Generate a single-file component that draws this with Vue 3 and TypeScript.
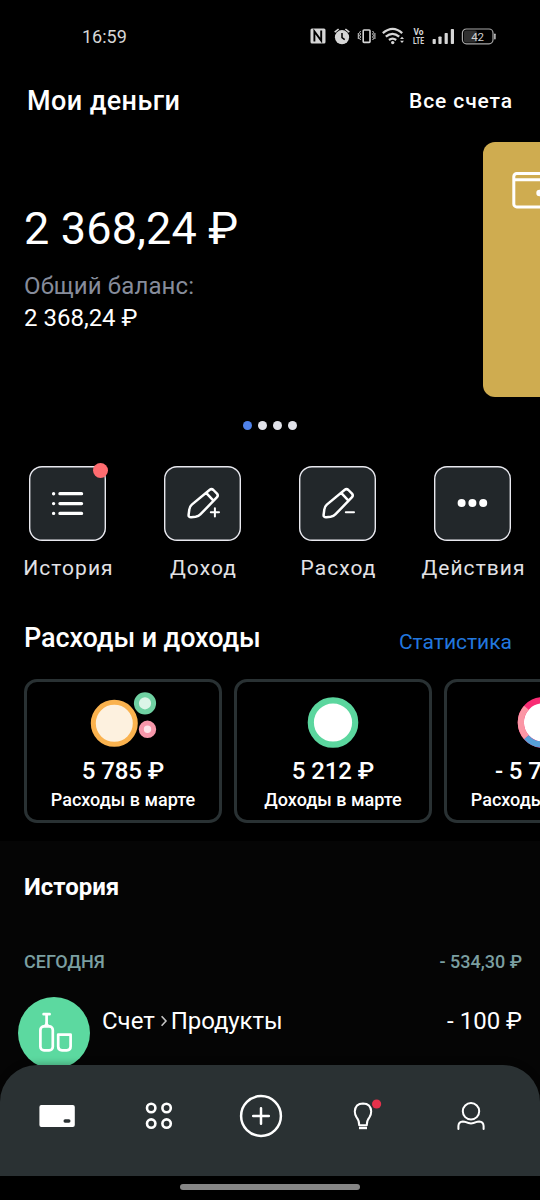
<script setup lang="ts">
type ActionIcon = 'list' | 'add' | 'minus' | 'more'

interface Action {
  label: string
  icon: ActionIcon
  badge?: boolean
}

interface Summary {
  amount: string
  caption: string
  chart: 'bubbles' | 'single' | 'parts'
}

const pages: boolean[] = [true, false, false, false]

const actions: Action[] = [
  { label: 'История', icon: 'list', badge: true },
  { label: 'Доход', icon: 'add' },
  { label: 'Расход', icon: 'minus' },
  { label: 'Действия', icon: 'more' },
]

const summaries: Summary[] = [
  { amount: '5 785 ₽', caption: 'Расходы в марте', chart: 'bubbles' },
  { amount: '5 212 ₽', caption: 'Доходы в марте', chart: 'single' },
  { amount: '- 5 785 ₽', caption: 'Расходы в марте', chart: 'parts' },
]
</script>

<template>
  <div class="screen">
    <header class="status">
      <span class="clock">16:59</span>
      <svg class="status-icons" width="190" height="20" viewBox="0 0 190 20">
        <g fill="none" stroke="#d6d6d6">
          <rect x="0.5" y="2.5" width="15" height="15" rx="1.5" fill="#d6d6d6" stroke="none" />
          <path d="M4.4 15.4V5.4l6.8 9.2V4.6" stroke="#000" stroke-width="1.9" />
          <circle cx="32" cy="11.2" r="7.1" fill="#d6d6d6" stroke="none" />
          <path d="M24.7 6.2l3.9-3.2M39.3 6.2l-3.9-3.2" stroke-width="1.6" />
          <path d="M32 7v4.6l2.7 2" stroke="#000" stroke-width="1.5" />
          <rect x="53.2" y="4" width="6.8" height="12.4" rx="0.8" stroke-width="1.6" />
          <path d="M50.6 5l-1 1.5 1 1.5-1 1.5 1 1.5-1 1.5 1 1.5M62.6 5l1 1.5-1 1.5 1 1.5-1 1.5 1 1.5-1 1.5M48.3 7v6M64.9 7v6" stroke-width="1" />
          <path d="M72.8 7.2q10-8.6 19.4 0M75.8 10.7q6.8-5.7 13.4 0M79 14q3.5-2.8 7.2 0" stroke-width="2.3" />
          <circle cx="82.7" cy="16.6" r="1.7" fill="#d6d6d6" stroke="none" />
          <path d="M90 13l2-2.3 2 2.3zM90 14.8l2 2.3 2-2.3z" fill="#d6d6d6" stroke="none" />
        </g>
        <text class="volte" x="103.4" y="8.8" textLength="10" lengthAdjust="spacingAndGlyphs">Vo</text>
        <text class="volte" x="103" y="17.8" textLength="11" lengthAdjust="spacingAndGlyphs">LTE</text>
        <g fill="#d6d6d6">
          <rect x="122.6" y="13" width="3.2" height="5" rx="0.8" />
          <rect x="128.4" y="10.4" width="3.2" height="7.6" rx="0.8" />
          <rect x="134.6" y="7" width="3.2" height="11" rx="0.8" />
          <rect x="140.8" y="3" width="3.2" height="15" rx="0.8" />
          <rect x="184.2" y="7.5" width="1.4" height="6" rx="0.7" />
        </g>
        <rect x="154" y="4.6" width="13" height="11.8" rx="2" fill="#303030" />
        <rect x="152.4" y="3" width="30.6" height="14.8" rx="4" fill="none" stroke="#a8a8a8" stroke-width="1.2" />
        <text class="battery" x="167.6" y="14.6" text-anchor="middle">42</text>
      </svg>
    </header>

    <div class="heading">
      <h1>Мои деньги</h1>
      <a class="all">Все счета</a>
    </div>

    <section class="carousel">
      <div class="balance">
        <div class="total">2 368,24 ₽</div>
        <div class="total-label">Общий баланс:</div>
        <div class="total-small">2 368,24 ₽</div>
      </div>
      <div class="account">
        <svg width="44" height="38" viewBox="0 0 44 38" fill="none" stroke="#fff" stroke-width="3">
          <rect x="1.8" y="1.5" width="40" height="33.4" rx="3" />
          <path d="M2 7.7h39" />
          <circle cx="27.5" cy="21" r="3.2" fill="#fff" stroke="none" />
        </svg>
      </div>
    </section>

    <div class="dots">
      <i v-for="(active, i) in pages" :key="i" :class="{ active }"></i>
    </div>

    <nav class="actions">
      <div v-for="a in actions" :key="a.label" class="action">
        <div class="tile">
          <svg width="77" height="75" viewBox="0 0 77 75" fill="none" stroke="#fff" stroke-linecap="round" stroke-linejoin="round">
            <template v-if="a.icon === 'list'">
              <path d="M30.9 27.7h21.7M30.9 37.6h21.7M30.9 47.4h21.7" stroke-width="3.2" />
              <path d="M24.6 27.7h.01M24.6 37.6h.01M24.6 47.4h.01" stroke-width="3.4" />
            </template>
            <g v-else-if="a.icon === 'more'" fill="#fff" stroke="none">
              <circle cx="27.6" cy="37" r="4" />
              <circle cx="38.4" cy="37" r="4" />
              <circle cx="49.2" cy="37" r="4" />
            </g>
            <template v-else>
              <path d="M27.8 38.6L45.8 23.8Q47.6 22.3 49.4 24L53 27.7Q54.6 29.5 52.8 31.4L36.6 48.2Q34.6 50.4 31.6 50.8L27.2 51.2Q24.4 51.3 24.6 48.8L25.3 43.6Q25.7 40.5 27.8 38.6ZM42.4 27.2L49.4 34.6" stroke-width="2.5" />
              <path v-if="a.icon === 'add'" d="M46.8 46.3h8.2M50.9 42.2v8.2" stroke-width="2" />
              <path v-else d="M46.8 46.3h8.2" stroke-width="2" />
            </template>
          </svg>
          <i v-if="a.badge" class="badge"></i>
        </div>
        <span>{{ a.label }}</span>
      </div>
    </nav>

    <div class="subheading">
      <h2>Расходы и доходы</h2>
      <a>Статистика</a>
    </div>

    <section class="summaries">
      <article v-for="(s, i) in summaries" :key="i" class="summary">
        <svg width="80" height="60" viewBox="0 0 80 60" fill="none">
          <template v-if="s.chart === 'bubbles'">
            <circle cx="31.3" cy="31.3" r="21" fill="#fdf1df" stroke="#fab24e" stroke-width="5" />
            <circle cx="62" cy="11.3" r="8.6" fill="#dcf5e8" stroke="#6fd1a2" stroke-width="5" />
            <circle cx="64.5" cy="37.3" r="6.2" fill="#fde4e9" stroke="#f697aa" stroke-width="5" />
          </template>
          <circle v-else-if="s.chart === 'single'" cx="40" cy="30.5" r="22.2" fill="#fff" stroke="#5bd69e" stroke-width="6.2" />
          <template v-else>
            <circle cx="40" cy="30.5" r="22.2" fill="#fff" stroke="#f92c74" stroke-width="6.2" />
            <path d="M23.4 45.2A22.2 22.2 0 0 1 23.4 15.8" stroke="#fb96a5" stroke-width="6.2" />
            <path d="M23.4 45.2A22.2 22.2 0 0 0 56.6 45.2" stroke="#57a0d8" stroke-width="6.2" />
          </template>
        </svg>
        <strong>{{ s.amount }}</strong>
        <span>{{ s.caption }}</span>
      </article>
    </section>

    <section class="history">
      <h3>История</h3>
      <div class="day">
        <span>СЕГОДНЯ</span>
        <span>- 534,30 ₽</span>
      </div>
      <div class="entry">
        <svg class="category" width="72" height="72" viewBox="0 0 72 72" fill="none" stroke="#fff" stroke-width="2.7" stroke-linecap="round">
          <circle cx="36" cy="36" r="36" fill="#5cd9a0" stroke="none" />
          <path d="M25.6 17.2h6M28.6 17.5v11" />
          <path d="M25.6 29.2q3-1.2 3-4.2q0 3 3 4.2" stroke-width="1.6" />
          <rect x="22.4" y="29.4" width="12.4" height="24" rx="3.6" />
          <path d="M40.2 37.6h12.4v12q0 3.8-3.8 3.8h-4.8q-3.8 0-3.8-3.8z" stroke-linejoin="round" />
        </svg>
        <div class="route">
          <span>Счет</span>
          <svg width="8" height="12" viewBox="0 0 8 12" fill="none" stroke="#c4c4c4" stroke-width="1.6">
            <path d="M1.6 1.2L6 6L1.6 10.8" />
          </svg>
          <span class="to">Продукты</span>
        </div>
        <span class="sum">- 100 ₽</span>
      </div>
    </section>

    <footer class="bottom">
      <div class="tabs">
        <svg class="tab-wallet" width="36" height="44" viewBox="0 0 36 44">
          <rect x="0.4" y="11" width="35.4" height="22" rx="2" fill="#fff" />
          <rect x="24.5" y="25.3" width="7" height="3.4" rx="1.6" fill="#2a3133" />
        </svg>
        <svg class="tab-grid" width="30" height="44" viewBox="0 0 30 44" fill="none" stroke="#fff" stroke-width="2.6">
          <circle cx="7.2" cy="14" r="4.2" />
          <circle cx="22.6" cy="14" r="4.2" />
          <circle cx="7.2" cy="29.6" r="4.2" />
          <circle cx="22.6" cy="29.6" r="4.2" />
        </svg>
        <svg class="tab-add" width="44" height="44" viewBox="0 0 44 44" fill="none" stroke="#fff" stroke-width="2.5" stroke-linecap="round">
          <circle cx="22" cy="22" r="19.9" />
          <path d="M14.2 22h15.6M22 14.2v15.6" />
        </svg>
        <svg class="tab-ideas" width="38" height="44" viewBox="0 0 38 44" fill="none" stroke="#fff" stroke-width="2" stroke-linejoin="round">
          <path d="M15.2 31.3Q15.2 26.4 12.6 23.4Q10.8 20.6 10.8 17.4Q11.2 9.5 19 9.4Q26.8 9.5 27.2 17.4Q27.2 20.6 25.4 23.4Q22.8 26.4 22.8 31.3Z" />
          <path d="M15 34h8" stroke-width="2.4" />
          <circle cx="32.6" cy="10" r="4.6" fill="#e5314b" stroke="none" />
        </svg>
        <svg width="30" height="44" viewBox="0 0 30 44" fill="none" stroke="#fff" stroke-width="2" stroke-linecap="round">
          <circle cx="15" cy="17.3" r="8.2" />
          <path d="M2.4 35V32Q2.6 27.6 6.8 27.4Q8.4 27.4 10 28.2Q15 30.6 20 28.2Q21.6 27.4 23.2 27.4Q27.4 27.6 27.6 32V35" />
        </svg>
      </div>
      <div class="gesture"><i></i></div>
    </footer>
  </div>
</template>

<style>
html,
body {
  background: #000;
}
</style>

<style scoped>
.screen {
  position: relative;
  width: 540px;
  height: 1200px;
  overflow: hidden;
  background: #000;
  color: #fff;
  font-family: Roboto, 'Noto Sans', sans-serif;
  white-space: nowrap;
}
h1,
h2,
h3 {
  margin: 0;
  font-weight: 500;
}
.status {
  display: flex;
  justify-content: space-between;
  align-items: center;
  box-sizing: border-box;
  height: 73px;
  padding: 0 40px 0 82px;
}
.status-icons {
  display: block;
  margin-top: -1px;
}
.clock {
  font-size: 18px;
  color: #d6d6d6;
}
.volte {
  font: 700 8.4px Roboto, sans-serif;
  fill: #d6d6d6;
}
.battery {
  font: 400 11.5px Roboto, sans-serif;
  fill: #d0d0d0;
}
.heading {
  display: flex;
  justify-content: space-between;
  align-items: center;
  height: 54px;
  margin-top: 1px;
  padding: 0 27px;
}
h1 {
  font-size: 27px;
  letter-spacing: 0.4px;
}
.all {
  font-size: 21px;
  font-weight: 500;
  letter-spacing: 0.9px;
}
.carousel {
  display: flex;
  height: 255px;
  margin-top: 14px;
  overflow: hidden;
}
.balance {
  flex: none;
  box-sizing: border-box;
  width: 482.5px;
  padding: 57px 0 0 24px;
}
.total {
  font-size: 45px;
  line-height: 60px;
  letter-spacing: 0.15px;
}
.total-label {
  margin-top: 11px;
  font-size: 24px;
  line-height: 32px;
  letter-spacing: 0.12px;
  color: #868c9b;
}
.total-small {
  font-size: 24px;
  line-height: 32px;
}
.account {
  flex: none;
  box-sizing: border-box;
  width: 420px;
  padding: 30px 29px;
  border-radius: 12px;
  background: #cfac50;
}
.account svg {
  display: block;
}
.dots {
  display: flex;
  justify-content: center;
  gap: 6px;
  margin-top: 24px;
}
.dots i {
  width: 9px;
  height: 9px;
  border-radius: 50%;
  background: #e2e3ea;
}
.dots i.active {
  background: #4f82ea;
}
.actions {
  display: grid;
  grid-template-columns: repeat(4, 135px);
  margin-top: 36px;
}
.action {
  display: flex;
  flex-direction: column;
  align-items: center;
}
.action span {
  margin-top: 13px;
  padding-left: 2px;
  font-size: 21px;
  line-height: 29px;
  letter-spacing: 1.05px;
  color: #e2e2e6;
}
.tile {
  position: relative;
  width: 77px;
  height: 75px;
  border-radius: 13px;
  background: #22272a;
  box-shadow: inset 0 0 0 1.4px #e8e8ee;
}
.tile svg {
  display: block;
}
.badge {
  position: absolute;
  top: -3px;
  right: -2px;
  width: 15px;
  height: 15px;
  border-radius: 50%;
  background: #ff6c70;
}
.subheading {
  display: flex;
  justify-content: space-between;
  align-items: baseline;
  height: 40px;
  margin-top: 35px;
  padding: 0 28px 0 24px;
}
h2 {
  font-size: 27px;
  line-height: 40px;
  letter-spacing: -0.1px;
}
.subheading a {
  position: relative;
  top: 2px;
  font-size: 21px;
  color: #2277de;
}
.summaries {
  display: flex;
  gap: 12px;
  height: 144px;
  margin-top: 21px;
  padding-left: 24px;
  overflow: hidden;
}
.summary {
  display: flex;
  flex: none;
  flex-direction: column;
  align-items: center;
  box-sizing: border-box;
  width: 198px;
  padding-top: 10px;
  border: 3px solid #293133;
  border-radius: 13px;
}
.summary svg {
  flex: none;
}
.summary strong {
  margin-top: 4px;
  font-size: 24px;
  font-weight: 500;
  line-height: 30px;
  letter-spacing: -0.1px;
}
.summary span {
  margin-top: 1px;
  font-size: 18px;
  font-weight: 500;
  line-height: 26px;
}
.history {
  height: 359px;
  margin-top: 18px;
  background: #050505;
}
h3 {
  padding: 29px 24px 0;
  font-size: 24px;
  font-weight: 700;
  line-height: 34px;
}
.day {
  display: flex;
  justify-content: space-between;
  margin-top: 46px;
  padding: 0 18px 0 24px;
  font-size: 18px;
  font-weight: 500;
  line-height: 24px;
  color: #7b9fa1;
}
.entry {
  display: flex;
  align-items: flex-start;
  margin-top: 23px;
  padding: 0 18px;
  font-size: 24px;
  line-height: 48px;
}
.category {
  flex: none;
}
.route {
  display: flex;
  align-items: center;
  flex: 1;
  padding-left: 12px;
}
.route svg {
  margin: 0 3px 0 5px;
}
.to {
  letter-spacing: -0.1px;
}
.bottom {
  position: absolute;
  left: 0;
  right: 0;
  bottom: 0;
}
.tabs {
  display: flex;
  align-items: flex-start;
  box-sizing: border-box;
  height: 111px;
  padding: 29px 54px 0 39px;
  border-radius: 37px 37px 0 0;
  background: #2a3133;
  box-shadow: 0 -2px 6px rgba(0, 0, 0, 0.25);
}
.tab-wallet {
  margin-right: 69px;
}
.tab-grid {
  margin-right: 65px;
}
.tab-add {
  margin-right: 61px;
}
.tab-ideas {
  margin-right: 74px;
}
.gesture {
  display: flex;
  justify-content: center;
  height: 24px;
  background: #000;
}
.gesture i {
  width: 180px;
  height: 6px;
  margin-top: 7.5px;
  border-radius: 3px;
  background: #868686;
}
</style>
